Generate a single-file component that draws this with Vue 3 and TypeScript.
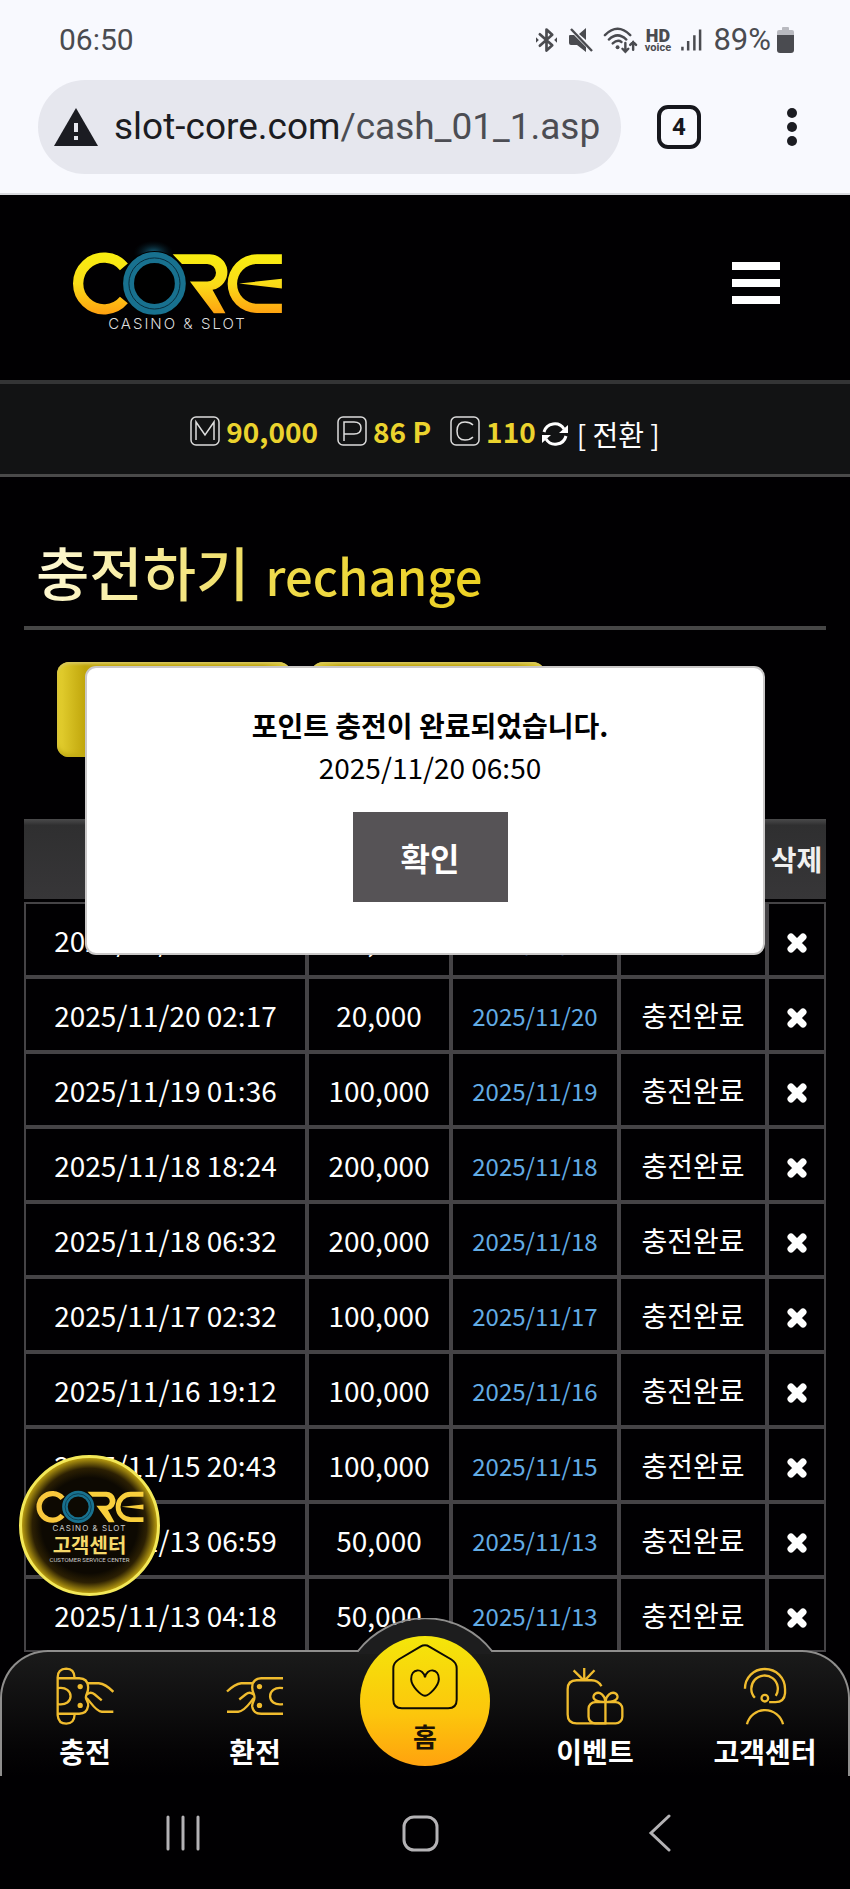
<script setup lang="ts">
import { ref } from 'vue'

interface Charge {
  requested: string
  amount: string
  processed: string
}

const charges = ref<Charge[]>([
  { requested: '2025/11/20 06:50', amount: '90,000', processed: '2025/11/20' },
  { requested: '2025/11/20 02:17', amount: '20,000', processed: '2025/11/20' },
  { requested: '2025/11/19 01:36', amount: '100,000', processed: '2025/11/19' },
  { requested: '2025/11/18 18:24', amount: '200,000', processed: '2025/11/18' },
  { requested: '2025/11/18 06:32', amount: '200,000', processed: '2025/11/18' },
  { requested: '2025/11/17 02:32', amount: '100,000', processed: '2025/11/17' },
  { requested: '2025/11/16 19:12', amount: '100,000', processed: '2025/11/16' },
  { requested: '2025/11/15 20:43', amount: '100,000', processed: '2025/11/15' },
  { requested: '2025/11/13 06:59', amount: '50,000', processed: '2025/11/13' },
  { requested: '2025/11/13 04:18', amount: '50,000', processed: '2025/11/13' },
])

const dialogOpen = ref(true)

function remove(index: number): void {
  charges.value.splice(index, 1)
}
</script>

<template>
  <div class="screen">
    <header class="browser">
      <div class="status">
        <span class="clock">06:50</span>
        <svg class="s-bt" viewBox="0 0 22 26" aria-hidden="true">
          <path d="M4 7 L17 18.500 L11 24 V2 L17 7.500 L4 19" fill="none" stroke="#4a4b50" stroke-width="2.800" stroke-linejoin="round" stroke-linecap="round" />
          <path d="M0 10 L3 13 L0 16 Z M22 10 L19 13 L22 16 Z" fill="#4a4b50" />
        </svg>
        <svg class="s-mute" viewBox="0 0 24 26" aria-hidden="true">
          <path d="M0 9 Q0 8 1 8 H5 L17 20 V25 L8 18 H2 Q0 18 0 16 Z M10 7 L17 1 V13 Z" fill="#4a4b50" />
          <path d="M2 2 L23 24" stroke="#4a4b50" stroke-width="2.400" />
        </svg>
        <svg class="s-wifi" viewBox="0 0 36 28" aria-hidden="true">
          <g fill="none" stroke="#4a4b50" stroke-width="2.500" stroke-linecap="round">
            <path d="M2 9 Q15 -4 28 9" /><path d="M6 13.500 Q15 5 24 13.500" /><path d="M10 17.500 Q15 13 19 16" />
            <path d="M23 17 V26 M20 23 L23 26 L26 23" /><path d="M31 24 V16 M28 19 L31 16 L34 19" />
          </g>
          <circle cx="15" cy="21.500" r="2" fill="#4a4b50" />
        </svg>
        <span class="hd"><b>HD</b><span>voice</span></span>
        <svg class="s-signal" viewBox="0 0 22 24" aria-hidden="true">
          <path d="M1.500 19 V23 M7.500 13 V23 M14 7 V23 M20 1 V23" stroke="#4a4b50" stroke-width="2.600" />
        </svg>
        <span class="percent">89%</span>
        <svg class="s-battery" viewBox="0 0 17 26" aria-hidden="true">
          <path d="M0 9 V5 Q0 3 2 3 H5 V1 Q5 0 6 0 H11 Q12 0 12 1 V3 H15 Q17 3 17 5 V9 Z" fill="#b9bac0" />
          <path d="M0 8 H17 V23 Q17 26 14 26 H3 Q0 26 0 23 Z" fill="#4a4b50" />
        </svg>
      </div>
      <div class="toolbar">
        <a class="address" href="#">
          <svg viewBox="0 0 44 38" aria-hidden="true">
            <path d="M22 0 L44 38 H0 Z" fill="#1b1c22" />
            <path d="M22 15 V24 M22 28 V32" stroke="#e6e7ee" stroke-width="4" />
          </svg>
          <span class="url">slot-core.com<span class="path">/cash_01_1.asp</span></span>
        </a>
        <button class="tabs" type="button">4</button>
        <button class="more" type="button" aria-label="menu"><i></i><i></i><i></i></button>
      </div>
    </header>

    <div class="site-head">
      <a class="logo" href="#" aria-label="CORE">
        <svg viewBox="60 60 645 232" aria-hidden="true">
          <defs>
            <linearGradient id="gold" x1="0" y1="98" x2="0" y2="285" gradientUnits="userSpaceOnUse">
              <stop offset="0" stop-color="#f8ee10" /><stop offset=".5" stop-color="#f9dc18" /><stop offset="1" stop-color="#ffa010" />
            </linearGradient>
            <radialGradient id="glow"><stop offset="0" stop-color="#1c7ea0" stop-opacity=".8" /><stop offset="1" stop-color="#06202c" stop-opacity="0" /></radialGradient>
          </defs>
          <ellipse cx="310" cy="98" rx="60" ry="36" fill="url(#glow)" />
          <path d="M221 141 A78 78 0 1 0 221 241" fill="none" stroke="url(#gold)" stroke-width="31" />
          <circle cx="313" cy="191" r="98" fill="#000" />
          <circle cx="313" cy="191" r="78" fill="none" stroke="#18718f" stroke-width="33" />
          <circle cx="313" cy="191" r="77" fill="none" stroke="#072c3c" stroke-width="3" />
          <path d="M368 103 H474 A54 54 0 0 1 488 210 L527 281 H492 L420 185 H472 A26 26 0 0 0 472 132 H396 Z" fill="url(#gold)" />
          <path d="M697 103 H622 A88 88 0 0 0 622 280 H697 V252 H622 A60 60 0 0 1 622 132 H697 Z M568 191 L697 177 V206 Z" fill="url(#gold)" />
        </svg>
        <span class="tagline">CASINO &amp; SLOT</span>
      </a>
      <button class="burger" type="button" aria-label="menu"><i></i><i></i><i></i></button>
    </div>

    <div class="wallet">
      <svg class="coin" viewBox="0 0 30 30" aria-hidden="true"><rect x="1" y="1" width="28" height="28" rx="5" /><path d="M6 24 V6 L15 19 L24 6 V24" /></svg>
      <b>90,000</b>
      <svg class="coin next" viewBox="0 0 30 30" aria-hidden="true"><rect x="1" y="1" width="28" height="28" rx="5" /><path d="M7 25 V6 H17 Q24 6 24 12 Q24 18 17 18 H7" /></svg>
      <b>86 P</b>
      <svg class="coin next" viewBox="0 0 30 30" aria-hidden="true"><rect x="1" y="1" width="28" height="28" rx="5" /><path d="M23 9 Q20 6 15 6 Q7 6 7 15 Q7 24 15 24 Q20 24 23 21" /></svg>
      <b>110</b>
      <button class="swap" type="button">
        <svg viewBox="0 0 26 26" aria-hidden="true">
          <path d="M2 11 A11 11 0 0 1 22 8 M24 15 A11 11 0 0 1 4 18" fill="none" stroke="#fff" stroke-width="3" />
          <path d="M26 4 V12 H17 Z M0 22 V14 H9 Z" fill="#fff" />
        </svg>
        [ 전환 ]
      </button>
    </div>

    <main class="content">
      <h1><span class="ko">충전하기</span> <span class="en">rechange</span></h1>
      <div class="actions">
        <button type="button" aria-label="충전신청"></button>
        <button type="button" aria-label="충전내역"></button>
      </div>

      <table>
        <colgroup><col class="c1" /><col class="c2" /><col class="c3" /><col class="c4" /><col class="c5" /></colgroup>
        <thead>
          <tr>
            <th aria-label="신청시간"></th>
            <th aria-label="금액"></th>
            <th aria-label="처리일"></th>
            <th aria-label="상태"></th>
            <th>삭제</th>
          </tr>
        </thead>
        <tbody>
          <tr v-for="(c, i) in charges" :key="c.requested">
            <td>{{ c.requested }}</td>
            <td>{{ c.amount }}</td>
            <td class="day">{{ c.processed }}</td>
            <td>충전완료</td>
            <td class="del">
              <button type="button" aria-label="삭제" @click="remove(i)">
                <svg viewBox="0 0 20 20" aria-hidden="true"><path d="M4 4 L16 16 M16 4 L4 16" stroke="#fff" stroke-width="7" stroke-linecap="round" /></svg>
              </button>
            </td>
          </tr>
        </tbody>
      </table>

      <div v-if="dialogOpen" class="dialog" role="dialog" aria-labelledby="dialog-title">
        <strong id="dialog-title">포인트 충전이 완료되었습니다.</strong>
        <span>2025/11/20 06:50</span>
        <button type="button" @click="dialogOpen = false">확인</button>
      </div>

      <a class="support" href="#">
        <svg viewBox="60 92 645 200" aria-hidden="true">
          <path d="M221 141 A78 78 0 1 0 221 241" fill="none" stroke="#f9c83c" stroke-width="31" />
          <circle cx="313" cy="191" r="98" fill="#0d0902" />
          <circle cx="313" cy="191" r="78" fill="none" stroke="#18718f" stroke-width="33" />
          <circle cx="313" cy="191" r="77" fill="none" stroke="#072c3c" stroke-width="4" />
          <path d="M368 103 H474 A54 54 0 0 1 488 210 L527 281 H492 L420 185 H472 A26 26 0 0 0 472 132 H396 Z" fill="#f9cf3c" />
          <path d="M697 103 H622 A88 88 0 0 0 622 280 H697 V252 H622 A60 60 0 0 1 622 132 H697 Z M568 191 L697 177 V206 Z" fill="#f9cf3c" />
        </svg>
        <span class="s1">CASINO &amp; SLOT</span>
        <span class="s2">고객센터</span>
        <span class="s3">CUSTOMER SERVICE CENTER</span>
      </a>
    </main>

    <nav class="dock">
      <svg class="bump" viewBox="0 0 140 36" aria-hidden="true">
        <path d="M0 36 L3 34 A85 85 0 0 1 137 34 L140 36 Z" fill="#1d1d1e" />
        <path d="M0 33 H3 A85 85 0 0 1 137 33 H140" fill="none" stroke="#8f8e8d" stroke-width="2" />
      </svg>
      <a href="#">
        <svg class="line" viewBox="168 231 175 175" aria-hidden="true">
          <path d="M224 263 Q223 236 199 236 Q173 237 173 262 V376 Q175 402 199 402 Q223 402 224 376" />
          <path d="M173 265 H238 Q264 265 265 292 C266 309 258 312 258 322 C258 333 267 336 265 348 Q261 372 238 372 H173 M173 295 C225 286 225 352 173 343" />
          <path d="M262 280 H297 Q318 282 341 306 M306 332 L285 314 Q271 303 260 315 M260 325 C270 332 287 365 306 366 H341" />
          <circle class="dot" cx="241" cy="290" r="8" /><circle class="dot" cx="241" cy="347" r="8" />
        </svg>
        <span>충전</span>
      </a>
      <a href="#">
        <svg class="line" viewBox="678 231 175 175" aria-hidden="true">
          <path d="M850 265 H784 Q758 266 757 292 C757 308 764 312 764 322 C764 334 756 338 757 350 Q760 372 784 372 H850 M850 295 C798 286 798 352 850 343" />
          <path d="M758 280 H724 Q705 282 681 305 M718 329 L737 314 Q751 303 762 315 M762 325 C750 338 735 365 715 366 H681" />
          <circle class="dot" cx="779" cy="290" r="8" /><circle class="dot" cx="779" cy="347" r="8" />
        </svg>
        <span>환전</span>
      </a>
      <a class="home" href="#">
        <svg viewBox="155 131 200 200" aria-hidden="true">
          <path d="M255 135 Q262 135 268 139 L335 178 Q351 188 351 205 V300 Q351 326 325 326 H185 Q159 326 159 300 V205 Q159 188 175 178 L241 139 Q248 135 255 135 Z" />
          <path d="M255 232 C250 203 212 203 213 238 C214 260 243 287 255 288 C267 287 296 260 297 238 C298 203 260 203 255 232 Z" />
        </svg>
        <span>홈</span>
      </a>
      <a href="#">
        <svg class="line" viewBox="438 231 175 175" aria-hidden="true">
          <path d="M545 289 Q535 271 515 271 H470 Q443 271 443 298 V374 Q443 401 470 401 H560" />
          <path d="M493 234 V270 M461 241 L490 270 M524 241 L496 270" />
          <rect x="506" y="337" width="102" height="64" rx="20" />
          <path d="M557 337 V401 M557 336 C520 338 514 320 527 311 C540 303 556 318 557 336 C558 318 575 303 588 311 C600 320 594 338 557 336" />
        </svg>
        <span>이벤트</span>
      </a>
      <a href="#">
        <svg class="line" viewBox="948 231 175 175" aria-hidden="true">
          <path d="M975 297 C975 262 1002 237 1035 237 C1070 237 1096 264 1096 298 V310 Q1094 337 1067 337 H1048" />
          <path d="M1005 324 A40 40 0 1 1 1068 318" />
          <circle cx="1035" cy="325" r="10" />
          <path d="M981 404 A56 56 0 0 1 1090 404" />
        </svg>
        <span>고객센터</span>
      </a>
    </nav>

    <footer class="system">
      <button type="button" aria-label="recents"><svg viewBox="0 0 38 38" aria-hidden="true"><path d="M4 3 V35 M19 3 V35 M34 3 V35" /></svg></button>
      <button type="button" aria-label="home"><svg viewBox="0 0 38 38" aria-hidden="true"><rect x="2" y="3" width="33" height="33" rx="10" /></svg></button>
      <button type="button" aria-label="back"><svg viewBox="0 0 38 38" aria-hidden="true"><path d="M28 2 L10 19 L28 36" /></svg></button>
    </footer>
  </div>
</template>

<style>
body {
  margin: 0;
  background: #000;
}
</style>

<style scoped>
.screen {
  display: flex;
  flex-direction: column;
  background: #010002;
  color: #fff;
  font-family: "Noto Sans CJK KR", "Noto Sans", sans-serif;
  font-size: 28px;
  line-height: 40px;
}
button {
  padding: 0;
  border: 0;
  background: none;
  color: inherit;
  font: inherit;
  cursor: pointer;
}
a {
  color: inherit;
  text-decoration: none;
}
svg {
  display: block;
  flex: none;
}

/* Browser chrome */
.browser {
  padding: 0 38px 19px;
  border-bottom: 2px solid #d9dade;
  background: #f8f9fe;
  color: #4a4b50;
  font-family: Roboto, sans-serif;
}
.status {
  display: flex;
  align-items: center;
  height: 80px;
  padding: 0 18px 0 21px;
  font-size: 31px;
}
.clock {
  flex: 1;
  font-size: 30px;
}
.s-bt { width: 21px; height: 26px; margin-right: 12px; }
.s-mute { width: 24px; height: 26px; margin-right: 10px; }
.s-wifi { width: 35px; height: 28px; margin-right: 6px; }
.s-signal { width: 21px; height: 24px; margin-right: 11px; }
.s-battery { width: 17px; height: 26px; margin-left: 6px; }
.hd {
  display: flex;
  flex-direction: column;
  align-items: center;
  width: 27px;
  margin-right: 10px;
  font-size: 11px;
  font-weight: 700;
  line-height: 9px;
}
.hd b {
  font-size: 18px;
  line-height: 14px;
}
.toolbar {
  display: flex;
  align-items: center;
}
.address {
  display: flex;
  flex: 1;
  align-items: center;
  gap: 16px;
  height: 94px;
  padding: 0 16px;
  border-radius: 47px;
  background: #e6e7ee;
}
.address svg {
  width: 44px;
  height: 38px;
}
.url {
  color: #1b1c22;
  font-size: 37px;
  white-space: nowrap;
}
.path {
  color: #4c4d53;
}
.tabs {
  width: 44px;
  height: 44px;
  margin: 0 74px 0 36px;
  border: 4px solid #16171d;
  border-radius: 11px;
  color: #16171d;
  font-size: 24px;
  font-weight: 700;
  line-height: 36px;
}
.more {
  display: flex;
  flex-direction: column;
  align-items: center;
  gap: 4px;
  width: 34px;
  margin-right: 3px;
}
.more i {
  width: 10px;
  height: 10px;
  border-radius: 50%;
  background: #1b1c22;
}

/* Site header */
.site-head {
  display: flex;
  align-items: flex-start;
  justify-content: space-between;
  padding: 45px 70px 49px;
}
.logo {
  display: flex;
  flex-direction: column;
  align-items: center;
  width: 215px;
}
.logo svg {
  width: 215px;
  height: 77px;
}
.tagline {
  color: #ddd;
  font-family: Inter, sans-serif;
  font-size: 15px;
  font-weight: 300;
  letter-spacing: 2px;
  line-height: 14px;
}
.burger {
  display: flex;
  flex-direction: column;
  gap: 9px;
  margin-top: 22px;
}
.burger i {
  width: 48px;
  height: 8px;
  background: #fff;
}

/* Balances */
.wallet {
  display: flex;
  align-items: center;
  justify-content: center;
  gap: 6px;
  box-sizing: border-box;
  height: 97px;
  padding-top: 4px;
  border-top: 4px solid #333435;
  border-bottom: 3px solid #4a4a4a;
  background: #121314;
}
.wallet b {
  color: #ebd32e;
}
.coin {
  width: 30px;
  height: 30px;
  fill: none;
  stroke: #ddd;
  stroke-width: 1.500;
}
.next {
  margin-left: 13px;
}
.swap {
  display: flex;
  align-items: center;
  gap: 9px;
  margin-top: 6px;
}
.swap svg {
  width: 26px;
  height: 26px;
}

/* Page */
.content {
  position: relative;
  padding: 54px 24px 0;
}
h1 {
  display: flex;
  align-items: baseline;
  gap: 16px;
  margin: 0 0 32px;
  padding: 0 12px 11px;
  border-bottom: 4px solid #464646;
  font-weight: 500;
  line-height: 80px;
}
.ko,
.en {
  background: linear-gradient(100deg, #fffadb, #efdc5c);
  background-clip: text;
  color: transparent;
  font-size: 58px;
}
.en {
  background-image: linear-gradient(100deg, #f0dc50, #ecd021);
  font-size: 49px;
}
.actions {
  display: flex;
  gap: 20px;
  margin: 0 33px 62px;
}
.actions button {
  width: 234px;
  height: 95px;
  border-radius: 12px;
  background: linear-gradient(90deg, #e6d232, #c0a60c 12%, #c0a60c 88%, #e6d232);
  box-shadow: inset 0 2px 3px #d9c963, inset 0 -3px 4px #c2ac14;
}
table {
  width: 100%;
  border-collapse: separate;
  border-spacing: 0;
  table-layout: fixed;
}
.c1 { width: 283px; }
.c2 { width: 18%; }
.c3 { width: 21%; }
.c4 { width: 148px; }
.c5 { width: 59px; }
th {
  height: 80px;
  padding: 0;
  border-bottom: 3px solid #010002;
  background: linear-gradient(#4a4a4b, #2f2f30 8%, #373638);
  color: #f0f0f0;
  white-space: nowrap;
}
td {
  box-sizing: border-box;
  height: 75px;
  padding: 0;
  border: 2px solid #454346;
  text-align: center;
  white-space: nowrap;
}
.day {
  padding-top: 3px;
  color: #62abe4;
  font-size: 24px;
}
.del button {
  display: block;
  margin: 6px auto 0;
}
.del svg {
  width: 20px;
  height: 20px;
}

/* Confirmation */
.dialog {
  position: absolute;
  top: 189px;
  left: 10%;
  right: 10%;
  z-index: 2;
  display: flex;
  flex-direction: column;
  align-items: center;
  box-sizing: border-box;
  padding: 36px 0 51px 10px;
  border: 2px solid #cac8c8;
  border-radius: 11px;
  background: #fff;
  color: #000;
}
.dialog button {
  width: 155px;
  height: 90px;
  margin-top: 24px;
  background: #565356;
  color: #fff;
  font-size: 32px;
  font-weight: 700;
}
.dialog span,
.dialog strong {
  line-height: 42px;
}

/* Floating support badge */
.support {
  position: absolute;
  bottom: 56px;
  left: 19px;
  display: flex;
  flex-direction: column;
  align-items: center;
  box-sizing: border-box;
  width: 141px;
  height: 141px;
  padding-top: 32px;
  border: 3px solid #f3e858;
  border-radius: 50%;
  background: radial-gradient(circle, #0d0902 0 50%, #2c2003 60%, #b99c10 71%);
  white-space: nowrap;
}
.support svg {
  width: 112px;
  height: 34px;
}
.s1 {
  font-family: Inter, sans-serif;
  font-size: 8px;
  letter-spacing: 1px;
  line-height: 9px;
  color: #ccc;
}
.s2 {
  color: #f5d96a;
  font-size: 20px;
  font-weight: 700;
  line-height: 24px;
}
.s3 {
  color: #ccc;
  font-family: Roboto, sans-serif;
  font-size: 6px;
  line-height: 6px;
}

/* Bottom navigation */
.dock {
  position: relative;
  z-index: 1;
  display: grid;
  grid-template-columns: repeat(5, 1fr);
  height: 126px;
  margin-top: -2px;
  border-radius: 48px 48px 0 0;
  background: linear-gradient(#1b1b1b, #050405 80%, #010002);
  font-weight: 700;
}
.dock::before {
  content: "";
  position: absolute;
  inset: 0;
  border: 2px solid #8f8e8d;
  border-bottom: 0;
  border-radius: 48px 48px 0 0;
}
.dock a {
  position: relative;
  display: flex;
  flex-direction: column;
  align-items: center;
  padding-top: 17px;
}
.bump {
  position: absolute;
  top: -32px;
  left: 50%;
  width: 140px;
  height: 36px;
  margin-left: -70px;
}
.line {
  width: 58px;
  height: 58px;
  margin-bottom: 6px;
  fill: none;
  stroke: #f0bc2e;
  stroke-width: 7;
}
.dot {
  fill: #f0bc2e;
  stroke: none;
}
.dock .home {
  justify-self: center;
  box-sizing: border-box;
  width: 130px;
  height: 130px;
  margin-top: -14px;
  padding-top: 8px;
  border-radius: 50%;
  background: linear-gradient(#f4e60a, #fcc60c 60%, #ffa20e);
  color: #1c1205;
}
.home svg {
  width: 66px;
  height: 66px;
  margin-bottom: 6px;
  fill: none;
  stroke: #0c0a04;
  stroke-width: 6;
}
.home span {
  font-size: 26px;
}

/* System bar */
.system {
  display: grid;
  grid-template-columns: repeat(3, 1fr);
  height: 113px;
  padding: 0 71px 0 64px;
}
.system svg {
  width: 38px;
  height: 38px;
  margin: auto;
  fill: none;
  stroke: #b4b2b5;
  stroke-width: 3;
  stroke-linecap: round;
}
</style>
